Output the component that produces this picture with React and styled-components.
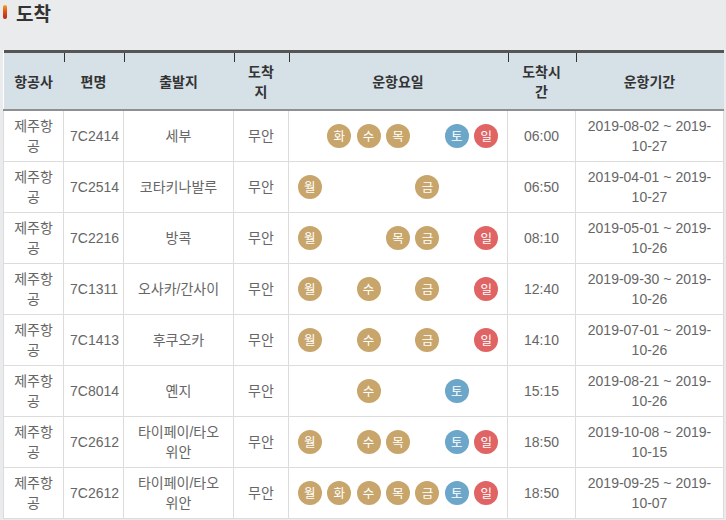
import React from "react";
import styled, { createGlobalStyle } from "styled-components";

const GlobalStyle = createGlobalStyle`
  html, body {
    margin: 0;
    padding: 0;
    background: #e9ebec;
    overflow: hidden;
  }
  body {
    font-family: "Liberation Sans", "Noto Sans CJK KR", sans-serif;
  }
`;

const Page = styled.div`
  width: 726px;
  height: 520px;
  overflow: hidden;
`;

const Title = styled.h2`
  display: flex;
  align-items: center;
  gap: 9px;
  height: 24px;
  margin: 0 0 26px 0;
  padding-left: 3px;
  font-size: 19px;
  font-weight: bold;
  color: #333;
  font-family: "Noto Sans CJK KR", sans-serif;
`;

// small gradient bar left of the title
const TitleMark = styled.span`
  width: 4px;
  height: 14px;
  border-radius: 2px;
  background: linear-gradient(#f3a51f, #e2531d 45%, #b3261e);
`;

const Table = styled.table`
  margin-left: 3px;
  width: 720px;
  table-layout: fixed;
  border-collapse: collapse;
  border-top: 3px solid #555;
  font-size: 14px;
  line-height: 20px;
  color: #666;
  background: #fff;
`;

const Th = styled.th`
  height: 56px;
  padding: 0 9px;
  font-weight: bold;
  color: #333;
  font-family: "Noto Sans CJK KR", sans-serif;
  font-size: 14px;
  text-align: center;
  border-bottom: 2px solid #8d8f90;
  background: ${(p) =>
    p.$first
      ? "#d5e0e7"
      : "linear-gradient(#333, #333) left top / 1px 9px no-repeat, #d5e0e7"};
`;

const Td = styled.td`
  height: 40px;
  padding: 5px ${(p) => p.$pad || 6}px;
  border: 1px solid #dcdcdc;
  text-align: center;
  vertical-align: middle;
`;

const Days = styled.div`
  display: flex;
  justify-content: center;
`;

const Day = styled.span`
  width: 24px;
  height: 24px;
  margin: 0 2.75px;
  border-radius: 50%;
  display: inline-flex;
  align-items: center;
  justify-content: center;
  font-size: 12.5px;
  line-height: 1;
  color: #fff;
  font-family: "Noto Sans CJK KR", sans-serif;
  visibility: ${(p) => (p.$on ? "visible" : "hidden")};
  background: ${(p) => p.$color};
`;

const DAYS = ["월", "화", "수", "목", "금", "토", "일"];
const dayColor = (d) =>
  d === "토" ? "#6ca6c9" : d === "일" ? "#e06464" : "#c8a56b";

const flights = [
  { no: "7C2414", from: "세부", days: "화수목토일", time: "06:00", start: "2019-08-02", end: "2019-10-27" },
  { no: "7C2514", from: "코타키나발루", days: "월금", time: "06:50", start: "2019-04-01", end: "2019-10-27" },
  { no: "7C2216", from: "방콕", days: "월목금일", time: "08:10", start: "2019-05-01", end: "2019-10-26" },
  { no: "7C1311", from: "오사카/간사이", days: "월수금일", time: "12:40", start: "2019-09-30", end: "2019-10-26" },
  { no: "7C1413", from: "후쿠오카", days: "월수금일", time: "14:10", start: "2019-07-01", end: "2019-10-26" },
  { no: "7C8014", from: "옌지", days: "수토", time: "15:15", start: "2019-08-21", end: "2019-10-26" },
  { no: "7C2612", from: "타이페이/타오위안", days: "월수목토일", time: "18:50", start: "2019-10-08", end: "2019-10-15" },
  { no: "7C2612", from: "타이페이/타오위안", days: "월화수목금토일", time: "18:50", start: "2019-09-25", end: "2019-10-07" },
];

const Period = ({ start, end }) => {
  const [y, ...rest] = end.split("-");
  return (
    <>
      {start} ~ {y}-<wbr />
      {rest.join("-")}
    </>
  );
};

export default function App() {
  return (
    <Page>
      <GlobalStyle />
      <Title>
        <TitleMark />
        도착
      </Title>
      <Table>
        <colgroup>
          <col style={{ width: 60 }} />
          <col style={{ width: 60 }} />
          <col style={{ width: 110 }} />
          <col style={{ width: 55 }} />
          <col style={{ width: 219 }} />
          <col style={{ width: 68 }} />
          <col style={{ width: 148 }} />
        </colgroup>
        <thead>
          <tr>
            <Th $first>항공사</Th>
            <Th>편명</Th>
            <Th>출발지</Th>
            <Th>도착지</Th>
            <Th>운항요일</Th>
            <Th>도착시간</Th>
            <Th>운항기간</Th>
          </tr>
        </thead>
        <tbody>
          {flights.map((f, i) => (
            <tr key={i}>
              <Td>제주항공</Td>
              <Td>{f.no}</Td>
              <Td $pad={10}>{f.from}</Td>
              <Td>무안</Td>
              <Td>
                <Days>
                  {DAYS.map((d) => (
                    <Day key={d} $on={f.days.includes(d)} $color={dayColor(d)}>
                      {d}
                    </Day>
                  ))}
                </Days>
              </Td>
              <Td>{f.time}</Td>
              <Td>
                <Period start={f.start} end={f.end} />
              </Td>
            </tr>
          ))}
        </tbody>
      </Table>
    </Page>
  );
}
